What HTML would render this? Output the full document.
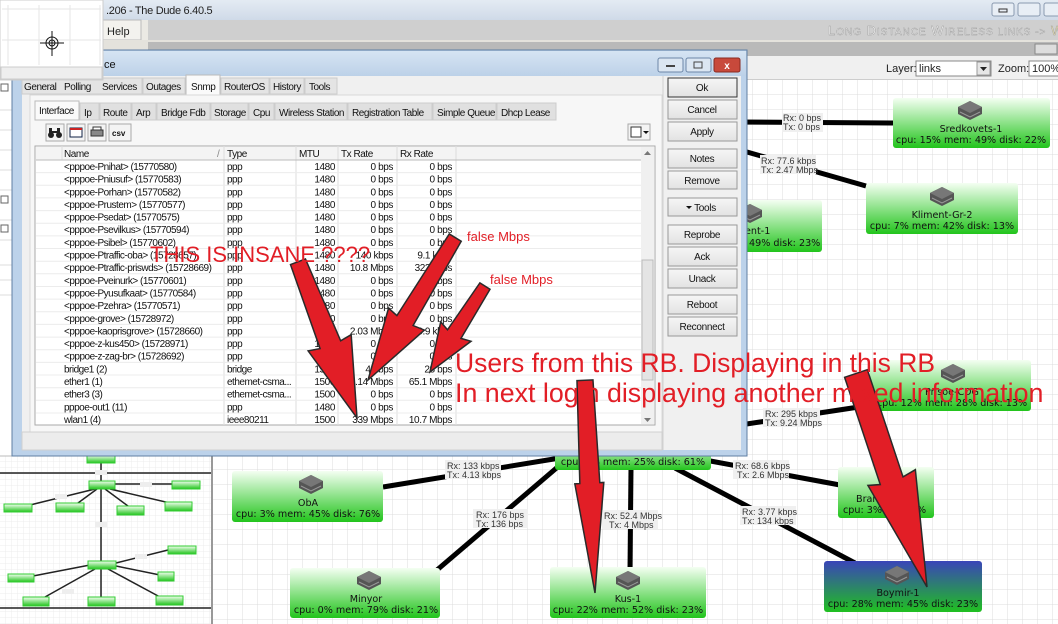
<!DOCTYPE html>
<html><head><meta charset="utf-8"><style>
html,body{margin:0;padding:0;width:1058px;height:624px;overflow:hidden;background:#fff}
svg{display:block}
text{font-family:"Liberation Sans",sans-serif}
.m{font-family:"DejaVu Sans Mono","Liberation Mono",monospace;font-size:9px;fill:#333}
.nd{font-family:"DejaVu Sans","Liberation Sans",sans-serif;font-size:9.6px;fill:#111}
.t{font-size:10px;fill:#111;letter-spacing:-0.5px}
.b{font-size:10px;fill:#111;text-anchor:middle;letter-spacing:-0.3px}
.r{font-size:10px;fill:#111;text-anchor:end;letter-spacing:-0.4px}
.tb{letter-spacing:-0.45px}
</style></head><body>
<svg width="1058" height="624" viewBox="0 0 1058 624" xmlns="http://www.w3.org/2000/svg">
<defs>
<pattern id="g" width="15" height="15" patternUnits="userSpaceOnUse" x="3" y="5">
<path d="M15 0V15M0 15H15" stroke="#dcdcdc" stroke-width="1" fill="none"/></pattern>
<pattern id="g2" width="6" height="6" patternUnits="userSpaceOnUse"><path d="M6 0V6M0 6H6" stroke="#ececec" fill="none"/></pattern>
<linearGradient id="gn" x1="0" y1="0" x2="0" y2="1"><stop offset="0" stop-color="#f4fff2"/><stop offset="1" stop-color="#22c41c"/></linearGradient>
<linearGradient id="bl" x1="0" y1="0" x2="0" y2="1"><stop offset="0" stop-color="#3a45b8"/><stop offset="1" stop-color="#20c020"/></linearGradient>
<linearGradient id="tb" x1="0" y1="0" x2="0" y2="1"><stop offset="0" stop-color="#e4ebf3"/><stop offset="1" stop-color="#cfdae8"/></linearGradient>
<linearGradient id="dt" x1="0" y1="0" x2="0" y2="1"><stop offset="0" stop-color="#d6e4f3"/><stop offset="1" stop-color="#bcd1e8"/></linearGradient>
<linearGradient id="btn" x1="0" y1="0" x2="0" y2="1"><stop offset="0" stop-color="#f6f6f6"/><stop offset="1" stop-color="#e2e2e2"/></linearGradient>
<g id="dev"><path d="M-12 -3 L0 -9 L12 -3 L12 4 L0 10 L-12 4Z" fill="#555"/><path d="M-12 -3 L0 3 L12 -3 L0 -9Z" fill="#777"/><path d="M-10 2 L0 7 L10 2" stroke="#999" fill="none"/></g>
</defs>

<rect x="0" y="0" width="1058" height="20" fill="url(#tb)"/>
<text x="106" y="14" font-size="11" fill="#222" letter-spacing="-0.3">.206 - The Dude 6.40.5</text>
<rect x="992" y="3" width="22" height="13" rx="2" fill="#e8eef5" stroke="#8a9ab0"/>
<rect x="1018" y="3" width="22" height="13" rx="2" fill="#e8eef5" stroke="#8a9ab0"/>
<rect x="1044" y="3" width="20" height="13" rx="2" fill="#e8eef5" stroke="#8a9ab0"/>
<rect x="999" y="9" width="8" height="3" fill="none" stroke="#333"/>
<rect x="0" y="20" width="1058" height="20" fill="#ebe9e4"/>
<rect x="103" y="20" width="38" height="20" fill="#f3f2ee" stroke="#bbb"/>
<text x="107" y="35" font-size="11" fill="#222">Help</text>
<rect x="148" y="20" width="910" height="20" fill="#cfcfcf"/>
<text x="828" y="35" font-size="13" fill="#f4f4f4" stroke="#9a9a9a" stroke-width="0.4" letter-spacing="1">L<tspan font-size="10">ONG</tspan> D<tspan font-size="10">ISTANCE</tspan> W<tspan font-size="10">IRELESS LINKS -&gt;</tspan> <tspan fill="#e8e0b0">WW</tspan></text>
<rect x="0" y="40" width="1058" height="16" fill="#e4e2dc"/>
<rect x="148" y="42" width="910" height="14" fill="#b9b9b9"/>
<rect x="1035" y="44" width="22" height="10" fill="#ddd" stroke="#888"/>
<rect x="215" y="56" width="843" height="24" fill="#f0f0f0"/>
<line x1="215" y1="80" x2="1058" y2="80" stroke="#aaa"/>
<text x="886" y="72" font-size="11" fill="#222">Layer:</text>
<rect x="916" y="61" width="75" height="15" fill="#fff" stroke="#888"/>
<text x="919" y="72" font-size="11" fill="#222">links</text>
<rect x="977" y="62" width="13" height="13" fill="#e6e6e6" stroke="#999"/>
<path d="M980 67 L987 67 L983.5 71Z" fill="#222"/>
<text x="998" y="72" font-size="11" fill="#222">Zoom:</text>
<rect x="1029" y="61" width="35" height="15" fill="#fff" stroke="#888"/>
<text x="1032" y="72" font-size="11" fill="#222">100%</text>

<rect x="212" y="80" width="846" height="544" fill="#fff"/>
<rect x="212" y="80" width="846" height="544" fill="url(#g)"/>
<line x1="212" y1="80" x2="212" y2="624" stroke="#999" stroke-width="2"/>
<rect x="0" y="80" width="12" height="376" fill="#fff"/>
<g stroke="#ddd"><line x1="0" y1="110" x2="12" y2="110"/><line x1="0" y1="130" x2="12" y2="130"/><line x1="0" y1="150" x2="12" y2="150"/><line x1="0" y1="170" x2="12" y2="170"/><line x1="0" y1="190" x2="12" y2="190"/><line x1="0" y1="220" x2="12" y2="220"/><line x1="0" y1="240" x2="12" y2="240"/><line x1="0" y1="265" x2="12" y2="265"/><line x1="0" y1="280" x2="12" y2="280"/><line x1="0" y1="295" x2="12" y2="295"/></g>
<rect x="1" y="84" width="7" height="7" fill="#fff" stroke="#666"/><rect x="1" y="196" width="7" height="7" fill="#fff" stroke="#666"/><rect x="1" y="225" width="7" height="7" fill="#fff" stroke="#666"/>

<rect x="0" y="456" width="211" height="168" fill="#fff"/>
<rect x="0" y="456" width="211" height="168" fill="url(#g2)"/>
<g stroke="#222" stroke-width="1.5">
<line x1="0" y1="473" x2="211" y2="473"/><line x1="0" y1="608" x2="211" y2="608"/>
<line x1="101" y1="463" x2="101" y2="481"/><line x1="101" y1="489" x2="101" y2="561"/>
<line x1="115" y1="484" x2="172" y2="484"/><line x1="95" y1="489" x2="30" y2="505"/><line x1="97" y1="489" x2="78" y2="503"/>
<line x1="105" y1="489" x2="128" y2="506"/><line x1="110" y1="489" x2="170" y2="503"/>
<line x1="116" y1="563" x2="168" y2="550"/><line x1="90" y1="565" x2="33" y2="576"/><line x1="116" y1="566" x2="160" y2="575"/>
<line x1="95" y1="569" x2="45" y2="597"/><line x1="101" y1="569" x2="101" y2="597"/><line x1="108" y1="569" x2="160" y2="597"/>
</g>
<g fill="url(#gn)" stroke="#3c3">
<rect x="87" y="455" width="28" height="8"/><rect x="89" y="481" width="26" height="8"/><rect x="172" y="481" width="28" height="8"/>
<rect x="4" y="504" width="28" height="8"/><rect x="56" y="503" width="28" height="9"/><rect x="117" y="506" width="27" height="9"/><rect x="165" y="502" width="27" height="9"/>
<rect x="168" y="546" width="28" height="8"/><rect x="88" y="561" width="28" height="8"/><rect x="8" y="574" width="26" height="8"/><rect x="158" y="572" width="16" height="9"/>
<rect x="23" y="597" width="26" height="9"/><rect x="88" y="597" width="27" height="9"/><rect x="156" y="596" width="27" height="9"/>
</g>
<g fill="#eee"><rect x="95" y="470" width="12" height="5"/><rect x="140" y="482" width="12" height="5"/><rect x="55" y="494" width="12" height="5"/><rect x="95" y="522" width="12" height="5"/><rect x="135" y="554" width="12" height="5"/><rect x="62" y="589" width="12" height="5"/></g>
<line x1="0" y1="456" x2="211" y2="456" stroke="#bbb"/>

<g stroke="#000" stroke-width="5" stroke-linecap="butt">
<line x1="740" y1="122" x2="893" y2="123"/>
<line x1="740" y1="150" x2="866" y2="186"/>
<line x1="383" y1="487" x2="560" y2="458"/>
<line x1="437" y1="570" x2="560" y2="465"/>
<line x1="631" y1="468" x2="630" y2="570"/>
<line x1="675" y1="468" x2="855" y2="563"/>
<line x1="705" y1="460" x2="840" y2="485"/>
<line x1="740" y1="425" x2="872" y2="405"/>
</g>
<g fill="#f0f0f0">
<rect x="782" y="113" width="41" height="19"/><rect x="760" y="155" width="56" height="19"/>
<rect x="445" y="460" width="56" height="19"/><rect x="473" y="509" width="55" height="19"/>
<rect x="602" y="510" width="56" height="19"/><rect x="740" y="506" width="56" height="19"/>
<rect x="733" y="460" width="56" height="19"/><rect x="763" y="408" width="57" height="19"/>
</g>
<g class="m">
<text x="783" y="121">Rx: 0 bps</text><text x="783" y="130">Tx: 0 bps</text>
<text x="761" y="164">Rx: 77.6 kbps</text><text x="761" y="173">Tx: 2.47 Mbps</text>
<text x="447" y="469">Rx: 133 kbps</text><text x="447" y="478">Tx: 4.13 kbps</text>
<text x="476" y="518">Rx: 176 bps</text><text x="476" y="527">Tx: 136 bps</text>
<text x="604" y="519">Rx: 52.4 Mbps</text><text x="609" y="528">Tx: 4 Mbps</text>
<text x="742" y="515">Rx: 3.77 kbps</text><text x="742" y="524">Tx: 134 kbps</text>
<text x="735" y="469">Rx: 68.6 kbps</text><text x="737" y="478">Tx: 2.6 Mbps</text>
<text x="765" y="417">Rx: 295 kbps</text><text x="765" y="426">Tx: 9.24 Mbps</text>
</g>

<g>
<rect x="893" y="98" width="157" height="50" rx="3" fill="url(#gn)"/><use href="#dev" x="970" y="110"/>
<text class="nd" x="971" y="132" text-anchor="middle">Sredkovets-1</text><text class="nd" x="971" y="143" text-anchor="middle">cpu: 15% mem: 49% disk: 22%</text>
<rect x="866" y="183" width="152" height="51" rx="3" fill="url(#gn)"/><use href="#dev" x="942" y="196"/>
<text class="nd" x="942" y="218" text-anchor="middle">Kliment-Gr-2</text><text class="nd" x="942" y="229" text-anchor="middle">cpu: 7% mem: 42% disk: 13%</text>
<rect x="700" y="200" width="122" height="52" rx="3" fill="url(#gn)"/><use href="#dev" x="750" y="213"/>
<text class="nd" x="745" y="234">ent-1</text><text class="nd" x="749" y="246">49% disk: 23%</text>
<rect x="870" y="360" width="161" height="51" rx="3" fill="url(#gn)"/><use href="#dev" x="953" y="373"/>
<text class="nd" x="952" y="395" text-anchor="middle" fill="#333">Prisoe-CDG</text><text class="nd" x="952" y="406" text-anchor="middle">cpu: 12% mem: 28% disk: 13%</text>
<rect x="555" y="440" width="156" height="30" rx="3" fill="url(#gn)"/>
<text class="nd" x="633" y="465" text-anchor="middle">cpu: 7% mem: 25% disk: 61%</text>
<rect x="232" y="471" width="151" height="51" rx="3" fill="url(#gn)"/><use href="#dev" x="311" y="484"/>
<text class="nd" x="308" y="506" text-anchor="middle">ObA</text><text class="nd" x="308" y="517" text-anchor="middle">cpu: 3% mem: 45% disk: 76%</text>
<rect x="838" y="467" width="96" height="51" rx="3" fill="url(#gn)"/>
<text class="nd" x="856" y="502">Bran</text><text class="nd" x="843" y="513">cpu: 3%</text><text class="nd" x="917" y="513">%</text>
<rect x="290" y="568" width="150" height="50" rx="3" fill="url(#gn)"/><use href="#dev" x="369" y="580"/>
<text class="nd" x="366" y="602" text-anchor="middle">Minyor</text><text class="nd" x="366" y="613" text-anchor="middle">cpu: 0% mem: 79% disk: 21%</text>
<rect x="550" y="567" width="156" height="51" rx="3" fill="url(#gn)"/><use href="#dev" x="628" y="580"/>
<text class="nd" x="628" y="602" text-anchor="middle">Kus-1</text><text class="nd" x="628" y="613" text-anchor="middle">cpu: 22% mem: 52% disk: 23%</text>
<rect x="824" y="561" width="158" height="51" rx="3" fill="url(#bl)"/><use href="#dev" x="897" y="575"/>
<text class="nd" x="898" y="596" text-anchor="middle">Boymir-1</text><text class="nd" x="903" y="607" text-anchor="middle">cpu: 28% mem: 45% disk: 23%</text>
</g>

<!-- DIALOG -->
<rect x="12" y="50" width="735" height="406" fill="#bcd2ea" stroke="#5f7fa3"/>
<rect x="13" y="51" width="733" height="25" fill="url(#dt)"/>
<text x="104" y="68" font-size="11" fill="#111">ce</text>
<rect x="658" y="58" width="25" height="14" rx="2" fill="#dbe6f2" stroke="#6d87a8"/>
<rect x="666" y="65" width="9" height="2" fill="#444"/>
<rect x="686" y="58" width="25" height="14" rx="2" fill="#dbe6f2" stroke="#6d87a8"/>
<rect x="694" y="62" width="8" height="6" fill="none" stroke="#444"/>
<rect x="714" y="58" width="26" height="14" rx="2" fill="#c8493b" stroke="#8a2b22"/>
<text x="727" y="69" font-size="10" fill="#fff" text-anchor="middle" font-weight="bold">x</text>
<rect x="22" y="76" width="719" height="374" fill="#f0f0f0"/>
<g font-size="10" fill="#111" class="tb">
<rect x="22" y="78" width="120" height="16" fill="#e4e4e4" stroke="#ccc"/>
<text x="24" y="90">General</text><text x="64" y="90">Polling</text><text x="102" y="90">Services</text>
<rect x="143" y="78" width="42" height="16" fill="#e4e4e4" stroke="#ccc"/><text x="146" y="90">Outages</text>
<rect x="186" y="75" width="34" height="20" fill="#fafafa" stroke="#bbb"/><text x="191" y="90">Snmp</text>
<rect x="221" y="78" width="48" height="16" fill="#e4e4e4" stroke="#ccc"/><text x="224" y="90">RouterOS</text>
<rect x="270" y="78" width="34" height="16" fill="#e4e4e4" stroke="#ccc"/><text x="273" y="90">History</text>
<rect x="305" y="78" width="32" height="16" fill="#e4e4e4" stroke="#ccc"/><text x="309" y="90">Tools</text>
</g>
<rect x="30" y="95" width="632" height="345" fill="#f7f7f7" stroke="#d8d8d8"/>
<g font-size="10" fill="#111" class="tb">
<g fill="#e0e0e0" stroke="#ccc">
<rect x="80" y="103" width="19" height="17"/><rect x="100" y="103" width="31" height="17"/><rect x="132" y="103" width="24" height="17"/><rect x="157" y="103" width="53" height="17"/><rect x="211" y="103" width="37" height="17"/><rect x="249" y="103" width="25" height="17"/><rect x="275" y="103" width="72" height="17"/><rect x="348" y="103" width="84" height="17"/><rect x="433" y="103" width="63" height="17"/><rect x="497" y="103" width="59" height="17"/></g>
<rect x="35" y="101" width="44" height="19" fill="#fafafa" stroke="#bbb"/><text x="39" y="114">Interface</text>
<text x="84" y="116">Ip</text><text x="103" y="116">Route</text><text x="136" y="116">Arp</text><text x="161" y="116">Bridge Fdb</text><text x="214" y="116">Storage</text><text x="253" y="116">Cpu</text><text x="279" y="116">Wireless Station</text><text x="352" y="116">Registration Table</text><text x="437" y="116">Simple Queue</text><text x="501" y="116">Dhcp Lease</text>
</g>
<g>
<rect x="46" y="124" width="18" height="17" fill="#f4f4f4" stroke="#aaa"/>
<circle cx="51" cy="135" r="3" fill="#222"/><circle cx="59" cy="135" r="3" fill="#222"/><rect x="49" y="128" width="3" height="6" fill="#222"/><rect x="57" y="128" width="3" height="6" fill="#222"/><rect x="52" y="131" width="5" height="2" fill="#222"/>
<rect x="67" y="124" width="18" height="17" fill="#f4f4f4" stroke="#aaa"/><rect x="70" y="128" width="12" height="9" fill="#fff" stroke="#124"/><rect x="70" y="128" width="12" height="2" fill="#c22"/>
<rect x="88" y="124" width="18" height="17" fill="#f4f4f4" stroke="#aaa"/><rect x="91" y="130" width="12" height="6" fill="#888" stroke="#333"/><rect x="93" y="127" width="8" height="3" fill="#fff" stroke="#333"/>
<rect x="109" y="124" width="22" height="17" fill="#f4f4f4" stroke="#aaa"/><text x="112" y="136" font-size="8" font-weight="bold" fill="#111">csv</text>
<rect x="628" y="124" width="22" height="16" fill="#f4f4f4" stroke="#aaa"/><rect x="631" y="127" width="10" height="10" fill="#fff" stroke="#333"/><path d="M643 131 L649 131 L646 134Z" fill="#111"/>
</g>
<rect x="35" y="146" width="620" height="279" fill="#fff" stroke="#aaa"/>
<rect x="36" y="147" width="605" height="13" fill="#f4f4f4"/>
<g stroke="#ddd"><line x1="62" y1="146" x2="62" y2="160"/><line x1="224" y1="146" x2="224" y2="425"/><line x1="296" y1="146" x2="296" y2="425"/><line x1="338" y1="146" x2="338" y2="425"/><line x1="397" y1="146" x2="397" y2="425"/><line x1="456" y1="146" x2="456" y2="425"/>
<line x1="36" y1="160" x2="641" y2="160" stroke="#bbb"/></g>
<g stroke="#ececec">
<line x1="36" y1="172.6" x2="641" y2="172.6"/><line x1="36" y1="185.3" x2="641" y2="185.3"/><line x1="36" y1="197.9" x2="641" y2="197.9"/><line x1="36" y1="210.6" x2="641" y2="210.6"/><line x1="36" y1="223.2" x2="641" y2="223.2"/><line x1="36" y1="235.9" x2="641" y2="235.9"/><line x1="36" y1="248.5" x2="641" y2="248.5"/><line x1="36" y1="261.2" x2="641" y2="261.2"/><line x1="36" y1="273.8" x2="641" y2="273.8"/><line x1="36" y1="286.5" x2="641" y2="286.5"/><line x1="36" y1="299.1" x2="641" y2="299.1"/><line x1="36" y1="311.8" x2="641" y2="311.8"/><line x1="36" y1="324.4" x2="641" y2="324.4"/><line x1="36" y1="337.1" x2="641" y2="337.1"/><line x1="36" y1="349.7" x2="641" y2="349.7"/><line x1="36" y1="362.4" x2="641" y2="362.4"/><line x1="36" y1="375" x2="641" y2="375"/><line x1="36" y1="387.7" x2="641" y2="387.7"/><line x1="36" y1="400.3" x2="641" y2="400.3"/><line x1="36" y1="413" x2="641" y2="413"/>
</g>
<rect x="641" y="147" width="13" height="277" fill="#f0f0f0"/>
<rect x="642" y="260" width="11" height="120" fill="#e4e4e4" stroke="#bbb"/>
<path d="M644 155 L651 155 L647.5 151Z" fill="#777"/><path d="M644 418 L651 418 L647.5 422Z" fill="#777"/>
<g font-size="10" fill="#111" class="tb">
<text x="64" y="157">Name</text><text x="217" y="157" fill="#888">/</text><text x="227" y="157">Type</text><text x="299" y="157">MTU</text><text x="341" y="157">Tx Rate</text><text x="400" y="157">Rx Rate</text>
</g>
<g class="t">
<text x="64" y="170">&lt;pppoe-Pnihat&gt; (15770580)</text>
<text x="64" y="182.6">&lt;pppoe-Pniusuf&gt; (15770583)</text>
<text x="64" y="195.3">&lt;pppoe-Porhan&gt; (15770582)</text>
<text x="64" y="207.9">&lt;pppoe-Prustem&gt; (15770577)</text>
<text x="64" y="220.6">&lt;pppoe-Psedat&gt; (15770575)</text>
<text x="64" y="233.2">&lt;pppoe-Psevilkus&gt; (15770594)</text>
<text x="64" y="245.9">&lt;pppoe-Psibel&gt; (15770602)</text>
<text x="64" y="258.5">&lt;pppoe-Ptraffic-oba&gt; (15728657)</text>
<text x="64" y="271.2">&lt;pppoe-Ptraffic-priswds&gt; (15728669)</text>
<text x="64" y="283.8">&lt;pppoe-Pveinurk&gt; (15770601)</text>
<text x="64" y="296.5">&lt;pppoe-Pyusufkaat&gt; (15770584)</text>
<text x="64" y="309.1">&lt;pppoe-Pzehra&gt; (15770571)</text>
<text x="64" y="321.8">&lt;pppoe-grove&gt; (15728972)</text>
<text x="64" y="334.4">&lt;pppoe-kaoprisgrove&gt; (15728660)</text>
<text x="64" y="347.1">&lt;pppoe-z-kus450&gt; (15728971)</text>
<text x="64" y="359.7">&lt;pppoe-z-zag-br&gt; (15728692)</text>
<text x="64" y="372.4">bridge1 (2)</text>
<text x="64" y="385">ether1 (1)</text>
<text x="64" y="397.7">ether3 (3)</text>
<text x="64" y="410.3">pppoe-out1 (11)</text>
<text x="64" y="423">wlan1 (4)</text>
</g>
<g class="t">
<text x="227" y="170">ppp</text><text x="227" y="182.6">ppp</text><text x="227" y="195.3">ppp</text><text x="227" y="207.9">ppp</text><text x="227" y="220.6">ppp</text><text x="227" y="233.2">ppp</text><text x="227" y="245.9">ppp</text><text x="227" y="258.5">ppp</text><text x="227" y="271.2">ppp</text><text x="227" y="283.8">ppp</text><text x="227" y="296.5">ppp</text><text x="227" y="309.1">ppp</text><text x="227" y="321.8">ppp</text><text x="227" y="334.4">ppp</text><text x="227" y="347.1">ppp</text><text x="227" y="359.7">ppp</text><text x="227" y="372.4">bridge</text><text x="227" y="385">ethemet-csma...</text><text x="227" y="397.7">ethemet-csma...</text><text x="227" y="410.3">ppp</text><text x="227" y="423">ieee80211</text>
</g>
<g class="r">
<text x="335" y="170">1480</text><text x="335" y="182.6">1480</text><text x="335" y="195.3">1480</text><text x="335" y="207.9">1480</text><text x="335" y="220.6">1480</text><text x="335" y="233.2">1480</text><text x="335" y="245.9">1480</text><text x="335" y="258.5">1480</text><text x="335" y="271.2">1480</text><text x="335" y="283.8">1480</text><text x="335" y="296.5">1480</text><text x="335" y="309.1">1480</text><text x="335" y="321.8">1480</text><text x="335" y="334.4">1480</text><text x="335" y="347.1">1480</text><text x="335" y="359.7">1480</text><text x="335" y="372.4">1500</text><text x="335" y="385">1500</text><text x="335" y="397.7">1500</text><text x="335" y="410.3">1480</text><text x="335" y="423">1500</text>
<text x="393" y="170">0 bps</text><text x="393" y="182.6">0 bps</text><text x="393" y="195.3">0 bps</text><text x="393" y="207.9">0 bps</text><text x="393" y="220.6">0 bps</text><text x="393" y="233.2">0 bps</text><text x="393" y="245.9">0 bps</text><text x="393" y="258.5">140 kbps</text><text x="393" y="271.2">10.8 Mbps</text><text x="393" y="283.8">0 bps</text><text x="393" y="296.5">0 bps</text><text x="393" y="309.1">0 bps</text><text x="393" y="321.8">0 bps</text><text x="393" y="334.4">2.03 Mbps</text><text x="393" y="347.1">0 bps</text><text x="393" y="359.7">0 bps</text><text x="393" y="372.4">41 bps</text><text x="393" y="385">4.14 Mbps</text><text x="393" y="397.7">0 bps</text><text x="393" y="410.3">0 bps</text><text x="393" y="423">339 Mbps</text>
<text x="452" y="170">0 bps</text><text x="452" y="182.6">0 bps</text><text x="452" y="195.3">0 bps</text><text x="452" y="207.9">0 bps</text><text x="452" y="220.6">0 bps</text><text x="452" y="233.2">0 bps</text><text x="452" y="245.9">0 bps</text><text x="452" y="258.5">9.1 kbps</text><text x="452" y="271.2">322 kbps</text><text x="452" y="283.8">0 bps</text><text x="452" y="296.5">0 bps</text><text x="452" y="309.1">0 bps</text><text x="452" y="321.8">0 bps</text><text x="452" y="334.4">0.9 kbps</text><text x="452" y="347.1">0 bps</text><text x="452" y="359.7">0 bps</text><text x="452" y="372.4">28 bps</text><text x="452" y="385">65.1 Mbps</text><text x="452" y="397.7">0 bps</text><text x="452" y="410.3">0 bps</text><text x="452" y="423">10.7 Mbps</text>
</g>
<rect x="22" y="432" width="640" height="18" fill="#ececec" stroke="#d0d0d0"/>
<line x1="663" y1="76" x2="663" y2="450" stroke="#d0d0d0"/>
<g>
<rect x="668" y="78" width="69" height="19" fill="url(#btn)" stroke="#333"/><text class="b" x="702" y="91">Ok</text>
<rect x="668" y="100" width="69" height="19" fill="url(#btn)" stroke="#999"/><text class="b" x="702" y="113">Cancel</text>
<rect x="668" y="122" width="69" height="19" fill="url(#btn)" stroke="#999"/><text class="b" x="702" y="135">Apply</text>
<rect x="668" y="149" width="69" height="19" fill="url(#btn)" stroke="#999"/><text class="b" x="702" y="162">Notes</text>
<rect x="668" y="171" width="69" height="18" fill="url(#btn)" stroke="#999"/><text class="b" x="702" y="184">Remove</text>
<rect x="668" y="198" width="69" height="18" fill="url(#btn)" stroke="#999"/><text class="b" x="705" y="211">Tools</text><path d="M686 206 L692 206 L689 209Z" fill="#111"/>
<rect x="668" y="225" width="69" height="19" fill="url(#btn)" stroke="#999"/><text class="b" x="702" y="238">Reprobe</text>
<rect x="668" y="247" width="69" height="19" fill="url(#btn)" stroke="#999"/><text class="b" x="702" y="260">Ack</text>
<rect x="668" y="269" width="69" height="19" fill="url(#btn)" stroke="#999"/><text class="b" x="702" y="282">Unack</text>
<rect x="668" y="295" width="69" height="19" fill="url(#btn)" stroke="#999"/><text class="b" x="702" y="308">Reboot</text>
<rect x="668" y="317" width="69" height="19" fill="url(#btn)" stroke="#999"/><text class="b" x="702" y="330">Reconnect</text>
</g>

<!-- top-left overlay box -->
<rect x="0" y="0" width="103" height="80" fill="#fff" stroke="#ccc"/>
<g stroke="#e6e6e6"><line x1="2" y1="9" x2="101" y2="9"/><line x1="2" y1="40" x2="101" y2="40"/><line x1="8" y1="5" x2="8" y2="65"/><line x1="39" y1="5" x2="39" y2="65"/><line x1="70" y1="5" x2="70" y2="65"/><line x1="100" y1="5" x2="100" y2="65"/></g>
<rect x="1" y="67" width="101" height="12" fill="#eee" stroke="#ccc"/>
<circle cx="52" cy="43" r="6" fill="none" stroke="#111"/><circle cx="52" cy="43" r="3" fill="none" stroke="#111"/>
<line x1="40" y1="43" x2="64" y2="43" stroke="#111"/><line x1="52" y1="31" x2="52" y2="56" stroke="#111"/>

<g fill="#e21e26" stroke="#2a2a2a" stroke-width="1.5" stroke-linejoin="miter">
<g transform="translate(357 418) rotate(-20.7)"><polygon points="-8,-167 8,-167 12,-78 24,-80 0,0 -22,-80 -10,-78"/></g>
<g transform="translate(368 380) rotate(31.5)"><polygon points="-7,-167 7,-167 10,-70 22,-72 0,0 -20,-72 -9,-70"/></g>
<g transform="translate(430 372) rotate(32.6)"><polygon points="-6,-102 6,-102 8,-45 18,-48 0,0 -18,-48 -8,-45"/></g>
<g transform="translate(595 593) rotate(-2.7)"><polygon points="-8,-213 8,-213 10,-110 14,-110 0,0 -15,-110 -10,-110"/></g>
<g transform="translate(927 587) rotate(-18.4)"><polygon points="-12,-225 12,-225 12,-112 26,-115 0,0 -24,-115 -12,-112"/></g>
</g>
<g fill="#e21e26">
<text x="150" y="262" font-size="22">THIS IS INSANE ????</text>
<text x="467" y="241" font-size="13">false Mbps</text>
<text x="490" y="284" font-size="13">false Mbps</text>
<text x="455" y="372" font-size="26.5">Users from this RB. Displaying in this RB</text>
<text x="455" y="402" font-size="26.8">In next login displaying another mixed information</text>
</g>
</svg>
</body></html>
